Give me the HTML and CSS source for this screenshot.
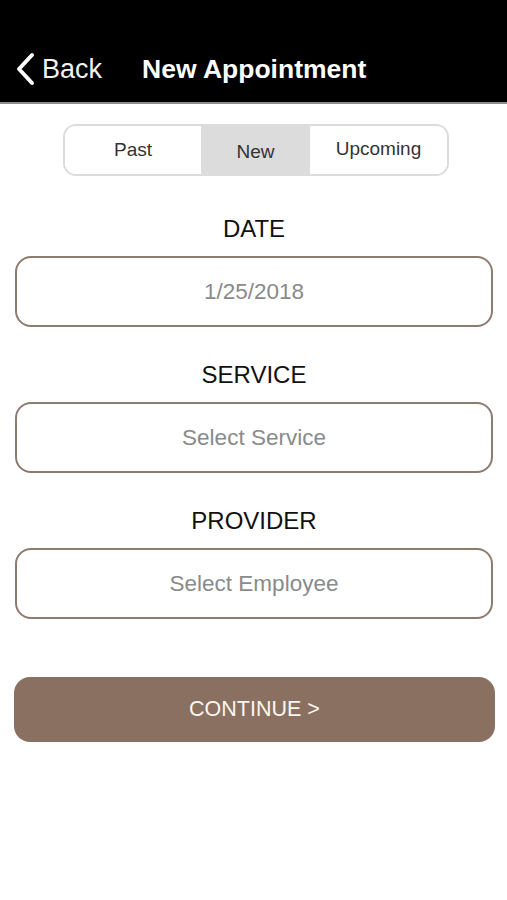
FILE: index.html
```html
<!DOCTYPE html>
<html lang="en">
<head>
    <meta charset="UTF-8">
    <meta name="viewport" content="width=device-width, initial-scale=1.0">
    <title>New Appointment</title>
    <link rel="stylesheet" href="styles.css">
</head>
<body>
    <header class="topbar">
        <a class="back" href="#">
            <svg class="chevron" width="20" height="34" viewBox="0 0 20 34">
                <path d="M17 3 L4 17 L17 31" fill="none" stroke="#fff" stroke-width="4" stroke-linecap="round" stroke-linejoin="round"/>
            </svg>
            <span>Back</span>
        </a>
        <h1 class="title">New Appointment</h1>
    </header>

    <main class="content">
        <div class="segments">
            <button class="seg seg-past">Past</button>
            <button class="seg seg-new active">New</button>
            <button class="seg seg-upcoming">Upcoming</button>
        </div>

        <div class="field">
            <label class="field-label">DATE</label>
            <div class="field-box">1/25/2018</div>
        </div>

        <div class="field">
            <label class="field-label">SERVICE</label>
            <div class="field-box">Select Service</div>
        </div>

        <div class="field">
            <label class="field-label">PROVIDER</label>
            <div class="field-box">Select Employee</div>
        </div>

        <button class="continue">CONTINUE &gt;</button>
    </main>
</body>
</html>
```

FILE: styles.css
```css
body {
    margin: 0;
    font-family: "Liberation Sans", Arial, sans-serif;
    background: #fff;
    color: #111;
}

.topbar {
    height: 104px;
    background: #000;
    border-bottom: 2px solid #8c8c8c;
    display: flex;
    align-items: flex-end;
    padding: 0 0 16px 15px;
    box-sizing: border-box;
}

.back {
    display: flex;
    align-items: center;
    color: #f2f2f2;
    text-decoration: none;
    font-size: 27px;
    height: 34px;
}

.chevron {
    margin-right: 7px;
}

.title {
    margin: 0 0 0 40px;
    color: #fff;
    font-size: 26.5px;
    font-weight: bold;
    line-height: 34px;
}

.content {
    padding: 20px 14px 0 15px;
}

.segments {
    display: flex;
    width: 382px;
    height: 48px;
    margin: 0 auto 0 48px;
    border: 2px solid #dcdcdc;
    border-radius: 13px;
    overflow: hidden;
}

.seg {
    border: none;
    background: #fff;
    font-family: "Liberation Sans", Arial, sans-serif;
    font-size: 19px;
    color: #333;
    padding: 0;
}

.seg-past {
    width: 136px;
}

.seg-new {
    width: 109px;
    background: #dcdcdc;
    padding-top: 4px;
}

.seg-upcoming {
    flex: 1;
    padding-bottom: 3px;
}

.field {
    display: flex;
    flex-direction: column;
    align-items: center;
    margin-top: 39px;
}

.field + .field {
    margin-top: 34px;
}

.field-label {
    font-size: 24px;
    line-height: 28px;
    color: #111;
    margin-bottom: 13px;
}

.field-box {
    width: 100%;
    height: 71px;
    box-sizing: border-box;
    border: 2px solid #8e7b70;
    border-radius: 16px;
    display: flex;
    align-items: center;
    justify-content: center;
    font-size: 22.5px;
    color: #8a8a8a;
}

.continue {
    display: block;
    width: 481px;
    height: 65px;
    margin: 58px 0 0 -1px;
    border: none;
    border-radius: 16px;
    background: #8a7061;
    color: #fbf6f0;
    font-family: "Liberation Sans", Arial, sans-serif;
    font-size: 21.5px;
}
```
